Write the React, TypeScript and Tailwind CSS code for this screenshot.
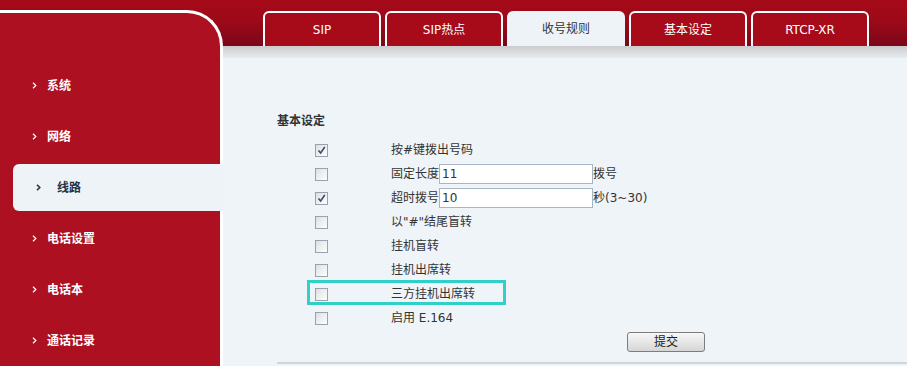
import React from "react";

const font = { fontFamily: '"DejaVu Sans", "Noto Sans CJK SC", sans-serif' };

const navItems = ["系统", "网络", "线路", "电话设置", "电话本", "通话记录"];
const tabs = ["SIP", "SIP热点", "收号规则", "基本设定", "RTCP-XR"];

function Chevron({ dark }: { dark?: boolean }) {
  return (
    <svg width="5" height="7" viewBox="0 0 5 7" className="shrink-0">
      <polyline
        points="1,0.8 3.8,3.5 1,6.2"
        fill="none"
        stroke={dark ? "#2a3a48" : "#ffffff"}
        strokeWidth={dark ? 1.6 : 1.2}
      />
    </svg>
  );
}

function CheckBox({ checked }: { checked?: boolean }) {
  return (
    <span className="flex h-[13px] w-[13px] shrink-0 items-center justify-center border border-[#9aa3ad] bg-[linear-gradient(135deg,#dcdfe2,#ffffff)]">
      {checked && (
        <svg width="9" height="9" viewBox="0 0 9 9">
          <polyline points="1.5,4.5 3.6,7 7.8,1" fill="none" stroke="#3c4a66" strokeWidth="1.6" />
        </svg>
      )}
    </span>
  );
}

function TextBox({ value }: { value: string }) {
  return (
    <span className="flex h-[20px] w-[154px] items-center border border-[#a7b6c6] bg-white pl-[2px] text-[12px] text-[#333]">
      {value}
    </span>
  );
}

export default function App() {
  return (
    <div className="flex h-[366px] w-[907px] overflow-hidden text-[12px]" style={font}>
      {/* Left menu */}
      <div className="flex w-[223px] flex-col bg-[linear-gradient(180deg,#a60a18_0px,#9c0918_22px,#7a0718_46px)]">
        <div className="mt-[10px] flex-1 rounded-tr-[36px] border-t-[3px] border-r-[3px] border-white bg-[#ad1020] pt-[47px]">
          {navItems.map((item) =>
            item === "线路" ? (
              <div key={item} className="flex h-[51px] items-center">
                <div className="ml-[13px] mr-[-3px] flex h-[47px] flex-1 items-center rounded-l-[6px] bg-[#eef3f8] pl-[23px]">
                  <Chevron dark />
                  <span className="ml-[16px] font-bold text-[#1d3446]">{item}</span>
                </div>
              </div>
            ) : (
              <div key={item} className="flex h-[51px] items-center pl-[32px]">
                <Chevron />
                <span className="ml-[10px] font-bold text-white">{item}</span>
              </div>
            )
          )}
        </div>
      </div>

      {/* Right side */}
      <div className="flex flex-1 flex-col">
        <div className="flex h-[46px] items-end gap-[4px] bg-[linear-gradient(180deg,#a60a18_0px,#9c0918_22px,#7a0718_46px)] pl-[40px]">
          {tabs.map((t) => (
            <div
              key={t}
              className={
                t === "收号规则"
                  ? "flex h-[35px] w-[118px] items-center justify-center rounded-t-[6px] bg-[#eef3f7] text-[#333]"
                  : "flex h-[35px] w-[118px] items-center justify-center rounded-t-[6px] border-2 border-b-0 border-white bg-[#a70a18] text-white"
              }
            >
              {t}
            </div>
          ))}
        </div>
        <div className="h-[12px] bg-[linear-gradient(180deg,#cbcbcd,#e7ecef)]" />

        <div className="flex-1 bg-[#eef4f7] pl-[54px] pt-[55px] text-[#333]">
          <div className="mb-[9px] font-bold leading-[16px]">基本设定</div>

          <div className="pl-[38px]">
            <div className="flex h-[24px] items-center">
              <CheckBox checked />
              <span className="ml-[63px]">按#键拨出号码</span>
            </div>
            <div className="flex h-[24px] items-center">
              <CheckBox />
              <span className="ml-[63px]">固定长度</span>
              <TextBox value="11" />
              <span>拨号</span>
            </div>
            <div className="flex h-[24px] items-center">
              <CheckBox checked />
              <span className="ml-[63px]">超时拨号</span>
              <TextBox value="10" />
              <span>秒(3~30)</span>
            </div>
            <div className="flex h-[24px] items-center">
              <CheckBox />
              <span className="ml-[63px]">以"#"结尾盲转</span>
            </div>
            <div className="flex h-[24px] items-center">
              <CheckBox />
              <span className="ml-[63px]">挂机盲转</span>
            </div>
            <div className="flex h-[24px] items-center">
              <CheckBox />
              <span className="ml-[63px]">挂机出席转</span>
            </div>
            <div className="relative flex h-[24px] items-center">
              <CheckBox />
              <span className="ml-[63px]">三方挂机出席转</span>
              <div className="absolute left-[-8px] top-[-2px] h-[25px] w-[199px] border-[3px] border-[#2ed0c8]" />
            </div>
            <div className="flex h-[24px] items-center">
              <CheckBox />
              <span className="ml-[63px]">启用 E.164</span>
            </div>
          </div>

          <button className="ml-[350px] mt-[2px] flex h-[20px] w-[78px] items-center justify-center rounded-[3px] border border-[#7d7d7d] bg-[linear-gradient(180deg,#f7f7f7,#d6d6d6)] text-[12px] text-[#222]">
            提交
          </button>

          <div className="mt-[10px] h-[2px] bg-[#cfd5d8]" />
        </div>
      </div>
    </div>
  );
}
